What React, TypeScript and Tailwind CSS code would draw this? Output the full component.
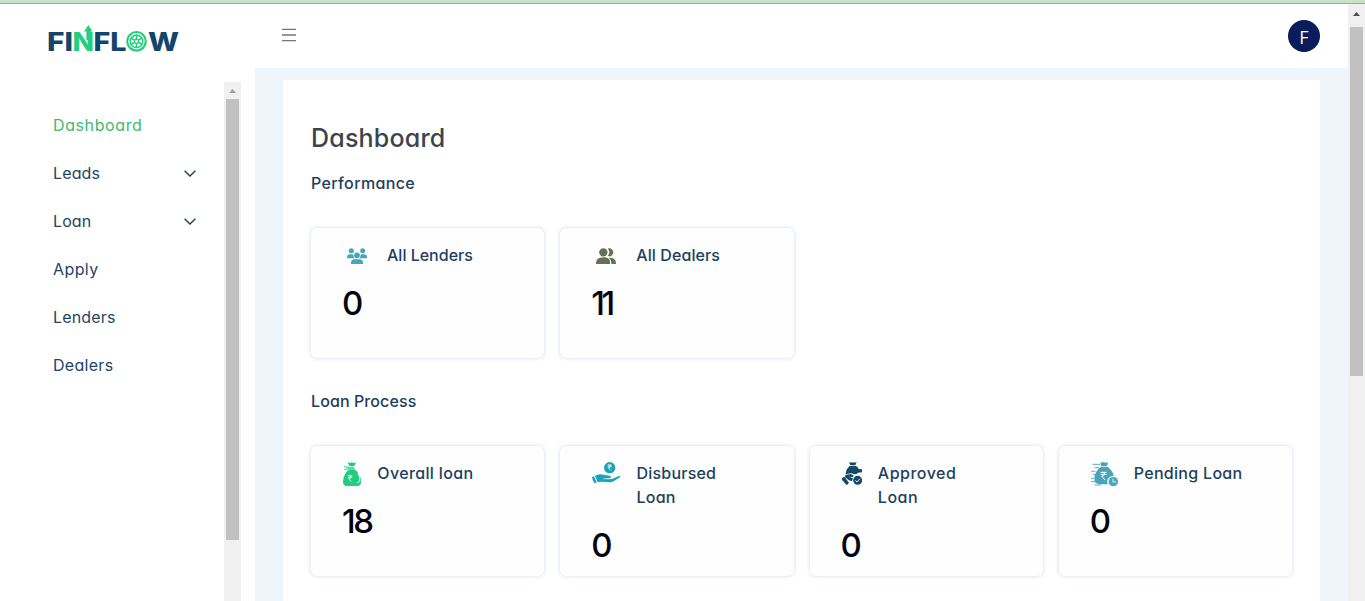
import type { ReactNode } from "react";

type Stat = {
  label: ReactNode;
  value: string;
  icon: ReactNode;
  rowClass: string;
  iconClass: string;
  labelClass: string;
  valueClass: string;
};

function Logo() {
  return (
    <svg width="144" height="50" viewBox="40 14 144 50" fontFamily="Inter, sans-serif" fontWeight="800" fontSize="25.5">
      <text x="47" y="50.5" fill="#12456b" textLength="26" lengthAdjust="spacingAndGlyphs">FI</text>
      <text x="72.6" y="50.5" fill="#24cf7b" textLength="21.5" lengthAdjust="spacingAndGlyphs">N</text>
      <text x="93.6" y="50.5" fill="#12456b" textLength="33" lengthAdjust="spacingAndGlyphs">FL</text>
      <text x="148" y="50.5" fill="#12456b" textLength="31" lengthAdjust="spacingAndGlyphs">W</text>
      <path d="M88.300 25l4.200 6.600h-2.300V40h-3.800v-8.400h-2.300z" fill="#24cf7b" />
      <g stroke="#24cf7b" fill="none">
        <circle cx="136.5" cy="41.3" r="9.3" strokeWidth="2.2" />
        <circle cx="136.5" cy="41.3" r="6.3" strokeWidth="1.5" />
        <circle cx="136.5" cy="41.3" r="2" strokeWidth="1.2" />
        <path d="M136.500 35v4.300M136.500 43.300v4.300M131 38.100l3.800 2.200M138.200 42.300l3.800 2.200M131 44.500l3.800-2.200M138.200 40.300l3.800-2.200" strokeWidth="1.6" />
      </g>
    </svg>
  );
}

function LendersIcon() {
  return (
    <svg width="20" height="16.33" viewBox="141 83 60 49" fill="#48a4b8">
      <circle cx="154" cy="91" r="7.5" />
      <circle cx="188" cy="91" r="7.5" />
      <circle cx="171" cy="105" r="8.5" />
      <path d="M141 114v-3q0-9 9-9h7q2 0 3 1 0 8 5 11z" />
      <path d="M201 114v-3q0-9-9-9h-7q-2 0-3 1 0 8-5 11z" />
      <path d="M153 132v-4q0-11 11-11h14q11 0 11 11v4z" />
    </svg>
  );
}

function DealersIcon() {
  return (
    <svg width="20" height="16.33" viewBox="122 83 60 49" fill="#65705a">
      <circle cx="144" cy="96" r="12.5" />
      <path d="M157 84.500q5-2 9 0 8 3 8 11.500t-8 11.500q-4 1.500-9-1 5-5 5-11t-5-11z" />
      <path d="M122 132v-3q0-18 22-18t20 18v3z" />
      <path d="M163 112q19 0 19 17v3h-14v-4q0-10-7-15z" />
    </svg>
  );
}

function MoneyBagIcon() {
  return (
    <svg width="18.33" height="24.33" viewBox="128 230 55 73" fill="#22cd83">
      <path d="M141 231l7 2 6-2 6 2 8-2-7 12h-13z" />
      <path d="M147 246h14l2 4h-16z" />
      <path d="M146 252h17q19 17 20 36 0 15-17 15h-22q-16 0-16-14 1-22 18-37z" />
      <path d="M147 246l-16-2M147 249l-15 4" stroke="#22cd83" strokeWidth="3" />
      <path d="M173 263q8 14 5 27M171 294l4-6" stroke="#fff" strokeWidth="3" fill="none" />
      <path d="M143 271h13M143 276h13M144 271q12 0 8 6-2 4-7 3l8 9" stroke="#fff" strokeWidth="2.2" fill="none" />
    </svg>
  );
}

function HandCoinIcon() {
  return (
    <svg width="28.33" height="21.33" viewBox="111 65 85 64" fill="#18a4bb">
      <circle cx="164" cy="82" r="17" />
      <path d="M158 74h12M158 79h12M160 74q9 0 6 5-2 4-6 3l7 8" stroke="#fff" strokeWidth="2.4" fill="none" />
      <path d="M111 110l6-2 8 18-6 3q-7-8-8-19z" />
      <path d="M120 107q12-8 24-4l20 3q6 2 4 6l-18 2 22 1 20-8q6-1 3 4l-19 12q-5 3-10 3-20-3-38-1z" />
      <path d="M145 115q17 2 27-1l13-7" stroke="#fff" strokeWidth="2" fill="none" />
    </svg>
  );
}

function ApprovedIcon() {
  return (
    <svg width="20.33" height="23" viewBox="111 66 61 69" fill="#17486a">
      <path d="M132 66q5 3 11 1 6 2 12-1l-4 10h-15z" />
      <path d="M135 78h18q6 3 8 9l10 1v9l-12 1q-5 6-12 4l-10-2-15 3q1-18 13-25z" />
      <path d="M121 105l16-3 10 5-4 4-11-1 12 5-3 9-9-3-12-9z" />
      <path d="M111 114l7-4 14 18-6 7q-6-3-9-9l-6-6z" />
      <circle cx="158" cy="121" r="13.5" />
      <path d="M151 121l5 5 9-10" stroke="#fff" strokeWidth="2.6" fill="none" />
    </svg>
  );
}

function PendingIcon() {
  return (
    <svg width="27" height="24.33" viewBox="123 65 81 73" fill="#48a4b8">
      <path d="M151 67l8-2 8 2 7-1-3 12h-18z" />
      <path d="M152 80h22q16 14 17 27-14 1-19 11-2 8 2 14h-27q-15-2-14-18 2-22 19-34z" />
      <path d="M128 72h22M134 82h13M124 93h12M129 103h8M123 114h9M123 124h13M133 134h20" stroke="#48a4b8" strokeWidth="2.6" />
      <path d="M152 96h18M152 102h18M154 96q13 0 10 6-2 6-9 5l10 12" stroke="#fff" strokeWidth="3" fill="none" />
      <circle cx="190" cy="124" r="14" />
      <path d="M189 115v10h9" stroke="#fff" strokeWidth="2.6" fill="none" />
    </svg>
  );
}

const performance: Stat[] = [
  { label: "All Lenders", value: "0", icon: <LendersIcon />, rowClass: "gap-5 pl-9", iconClass: "pt-[5px]", labelClass: "", valueClass: "" },
  { label: "All Dealers", value: "11", icon: <DealersIcon />, rowClass: "gap-5 pl-9", iconClass: "pt-[5px]", labelClass: "tracking-[0.1px]", valueClass: "tracking-[-3.5px]" },
];

const loans: Stat[] = [
  { label: "Overall loan", value: "18", icon: <MoneyBagIcon />, rowClass: "gap-4 pl-8", iconClass: "pt-px", labelClass: "tracking-[0.36px]", valueClass: "tracking-[-2.5px]" },
  { label: <>Disbursed<br />Loan</>, value: "0", icon: <HandCoinIcon />, rowClass: "gap-4 pl-8", iconClass: "pt-px", labelClass: "tracking-[0.2px]", valueClass: "" },
  { label: <>Approved<br />Loan</>, value: "0", icon: <ApprovedIcon />, rowClass: "gap-4 pl-8", iconClass: "pt-px", labelClass: "tracking-[0.5px]", valueClass: "" },
  { label: "Pending Loan", value: "0", icon: <PendingIcon />, rowClass: "gap-4 pl-8", iconClass: "pt-px", labelClass: "tracking-[0.3px]", valueClass: "" },
];

function Card({ stat }: { stat: Stat }) {
  return (
    <div className="h-[130px] rounded-md bg-[#fefefe] pt-[15px] shadow-[0_0_4px_rgba(150,175,200,0.45)]">
      <div className={`flex h-auto items-start ${stat.rowClass}`}>
        <div className={`h-6 shrink-0 ${stat.iconClass}`}>{stat.icon}</div>
        <div className={`text-base leading-6 font-medium whitespace-nowrap text-[#1d4060] ${stat.labelClass}`}>{stat.label}</div>
      </div>
      <div className={`mt-3 pl-[31px] text-[33px] leading-[48px] font-medium text-[#02030f] ${stat.valueClass}`}>{stat.value}</div>
    </div>
  );
}

function Chevron() {
  return (
    <svg width="12" height="7" viewBox="0 0 12 7" fill="none" stroke="#1f466b" strokeWidth="1.5">
      <path d="M.6.7L6 6 11.400.7" />
    </svg>
  );
}

const nav = [
  { name: "Dashboard", className: "tracking-[0.6px] text-[#3dba70]" },
  { name: "Leads", className: "tracking-[0.15px] text-[#244566]", expandable: true },
  { name: "Loan", className: "tracking-[0.1px] text-[#244566]", expandable: true },
  { name: "Apply", className: "tracking-[0.4px] text-[#244566]" },
  { name: "Lenders", className: "tracking-[0.15px] text-[#244566]" },
  { name: "Dealers", className: "tracking-[0.3px] text-[#244566]" },
];

export default function App() {
  return (
    <div className="flex h-[601px] w-[1365px] flex-col overflow-hidden bg-white font-['Inter',sans-serif] [font-feature-settings:'cv11']">
      <div className="h-1 shrink-0 border-b border-[#91b397] bg-[#c7e2c9]" />
      <div className="flex min-h-0 flex-1">
        <aside className="flex w-[255px] shrink-0 flex-col">
          <div className="h-[78px] shrink-0 pt-2.5 pl-10">
            <Logo />
          </div>
          <div className="flex min-h-0 flex-1">
            <nav className="flex w-[224px] flex-col pt-[19px] pr-7 pl-[53px]">
              {nav.map((item) => (
                <div
                  key={item.name}
                  className={`flex h-12 shrink-0 items-center justify-between text-base font-[380] ${item.className}`}
                >
                  <span>{item.name}</span>
                  {item.expandable && <Chevron />}
                </div>
              ))}
            </nav>
            <div className="flex w-[17px] flex-col items-center bg-[#f0f0f0]">
              <svg className="shrink-0" width="17" height="17" fill="#a0a0a0">
                <path d="M5 11h7L8.500 7z" />
              </svg>
              <div className="h-[441px] w-[13px] shrink-0 bg-[#c1c1c1]" />
            </div>
          </div>
        </aside>
        <div className="flex w-[1093px] flex-col">
          <header className="flex h-16 shrink-0 items-center justify-between pr-7 pl-[27px]">
            <svg className="mb-0.5" width="14" height="14" viewBox="0 0 14 14" stroke="#777" strokeWidth="1.3">
              <path d="M0 1.300h14M0 7h14M0 12.700h14" />
            </svg>
            <div className="flex size-8 items-center justify-center rounded-full bg-[#0b1c5c] pt-px font-['Open_Sans',sans-serif] text-lg font-medium text-white">F</div>
          </header>
          <main className="flex min-h-0 flex-1 bg-[#eef6fa] px-7 pt-3">
            <div className="flex-1 bg-white px-7">
              <h1 className="pt-10 text-[25px] leading-9 font-medium tracking-[0.2px] text-[#3a444e]">Dashboard</h1>
              <h2 className="mt-[15px] text-base leading-6 font-medium tracking-[0.36px] text-[#1d4060]">Performance</h2>
              <div className="mt-[33px] grid grid-cols-4 gap-4">
                {performance.map((s, i) => (
                  <Card key={i} stat={s} />
                ))}
              </div>
              <h2 className="mt-[31px] text-base leading-6 font-medium tracking-[0.1px] text-[#1d4060]">Loan Process</h2>
              <div className="mt-[33px] grid grid-cols-4 gap-4">
                {loans.map((s, i) => (
                  <Card key={i} stat={s} />
                ))}
              </div>
            </div>
          </main>
        </div>
        <div className="flex w-[17px] flex-col items-center bg-[#f0f0f0]">
          <svg className="shrink-0" width="17" height="23" fill="#505050">
            <path d="M5 12h7L8.500 8z" />
          </svg>
          <div className="h-[349px] w-[13px] shrink-0 bg-[#c1c1c1]" />
        </div>
      </div>
    </div>
  );
}
